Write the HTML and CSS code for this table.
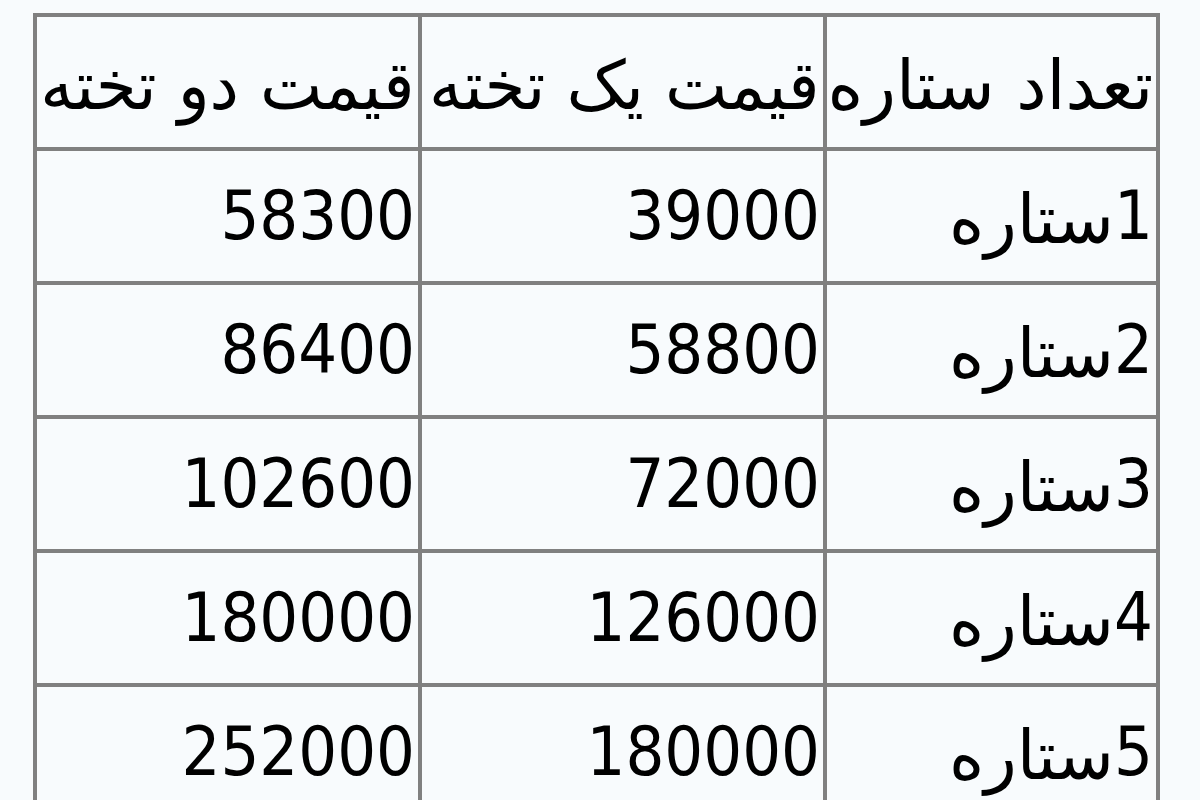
FILE: index.html
```html
<!DOCTYPE html>
<html lang="fa">
<head>
<meta charset="utf-8">
<title>قیمت هتل‌ها</title>
<link rel="stylesheet" href="styles.css">
</head>
<body>
<table class="prices" dir="rtl">
  <colgroup>
    <col class="col-stars">
    <col class="col-single">
    <col class="col-double">
  </colgroup>
  <tr class="head">
    <td><span class="fa fa-wide">تعداد ستاره</span></td>
    <td><span class="fa">قیمت یک تخته</span></td>
    <td><span class="fa">قیمت دو تخته</span></td>
  </tr>
  <tr>
    <td>1<span class="fa">ستاره</span></td>
    <td>39000</td>
    <td>58300</td>
  </tr>
  <tr>
    <td>2<span class="fa">ستاره</span></td>
    <td>58800</td>
    <td>86400</td>
  </tr>
  <tr>
    <td>3<span class="fa">ستاره</span></td>
    <td>72000</td>
    <td>102600</td>
  </tr>
  <tr>
    <td>4<span class="fa">ستاره</span></td>
    <td>126000</td>
    <td>180000</td>
  </tr>
  <tr>
    <td>5<span class="fa">ستاره</span></td>
    <td>180000</td>
    <td>252000</td>
  </tr>
</table>
</body>
</html>
```

FILE: styles.css
```css
html, body {
  margin: 0;
  padding: 0;
  background: #f8fbfd;
}

body {
  padding: 13px 0 0 33px;
  font-family: "DejaVu Sans Condensed", "DejaVu Sans", sans-serif;
  color: #000;
}

.prices {
  border-collapse: collapse;
  table-layout: fixed;
  width: 1127px;
  font-size: 68px;
}

.col-stars { width: 333px; }
.col-single { width: 405px; }
.col-double { width: 385px; }

.prices tr {
  height: 134px;
}

.prices td {
  border: 4px solid #808080;
  padding: 0 3px;
  text-align: right;
  vertical-align: middle;
  white-space: nowrap;
  overflow: hidden;
  line-height: 1.2;
}

.fa {
  display: inline-block;
  transform: translateY(4px) scaleX(1.1);
  transform-origin: right center;
}

.head .fa {
  transform: translateY(4px) scaleX(1.08);
}

.head .fa-wide {
  transform: translateY(4px) scaleX(1.115);
}
```
